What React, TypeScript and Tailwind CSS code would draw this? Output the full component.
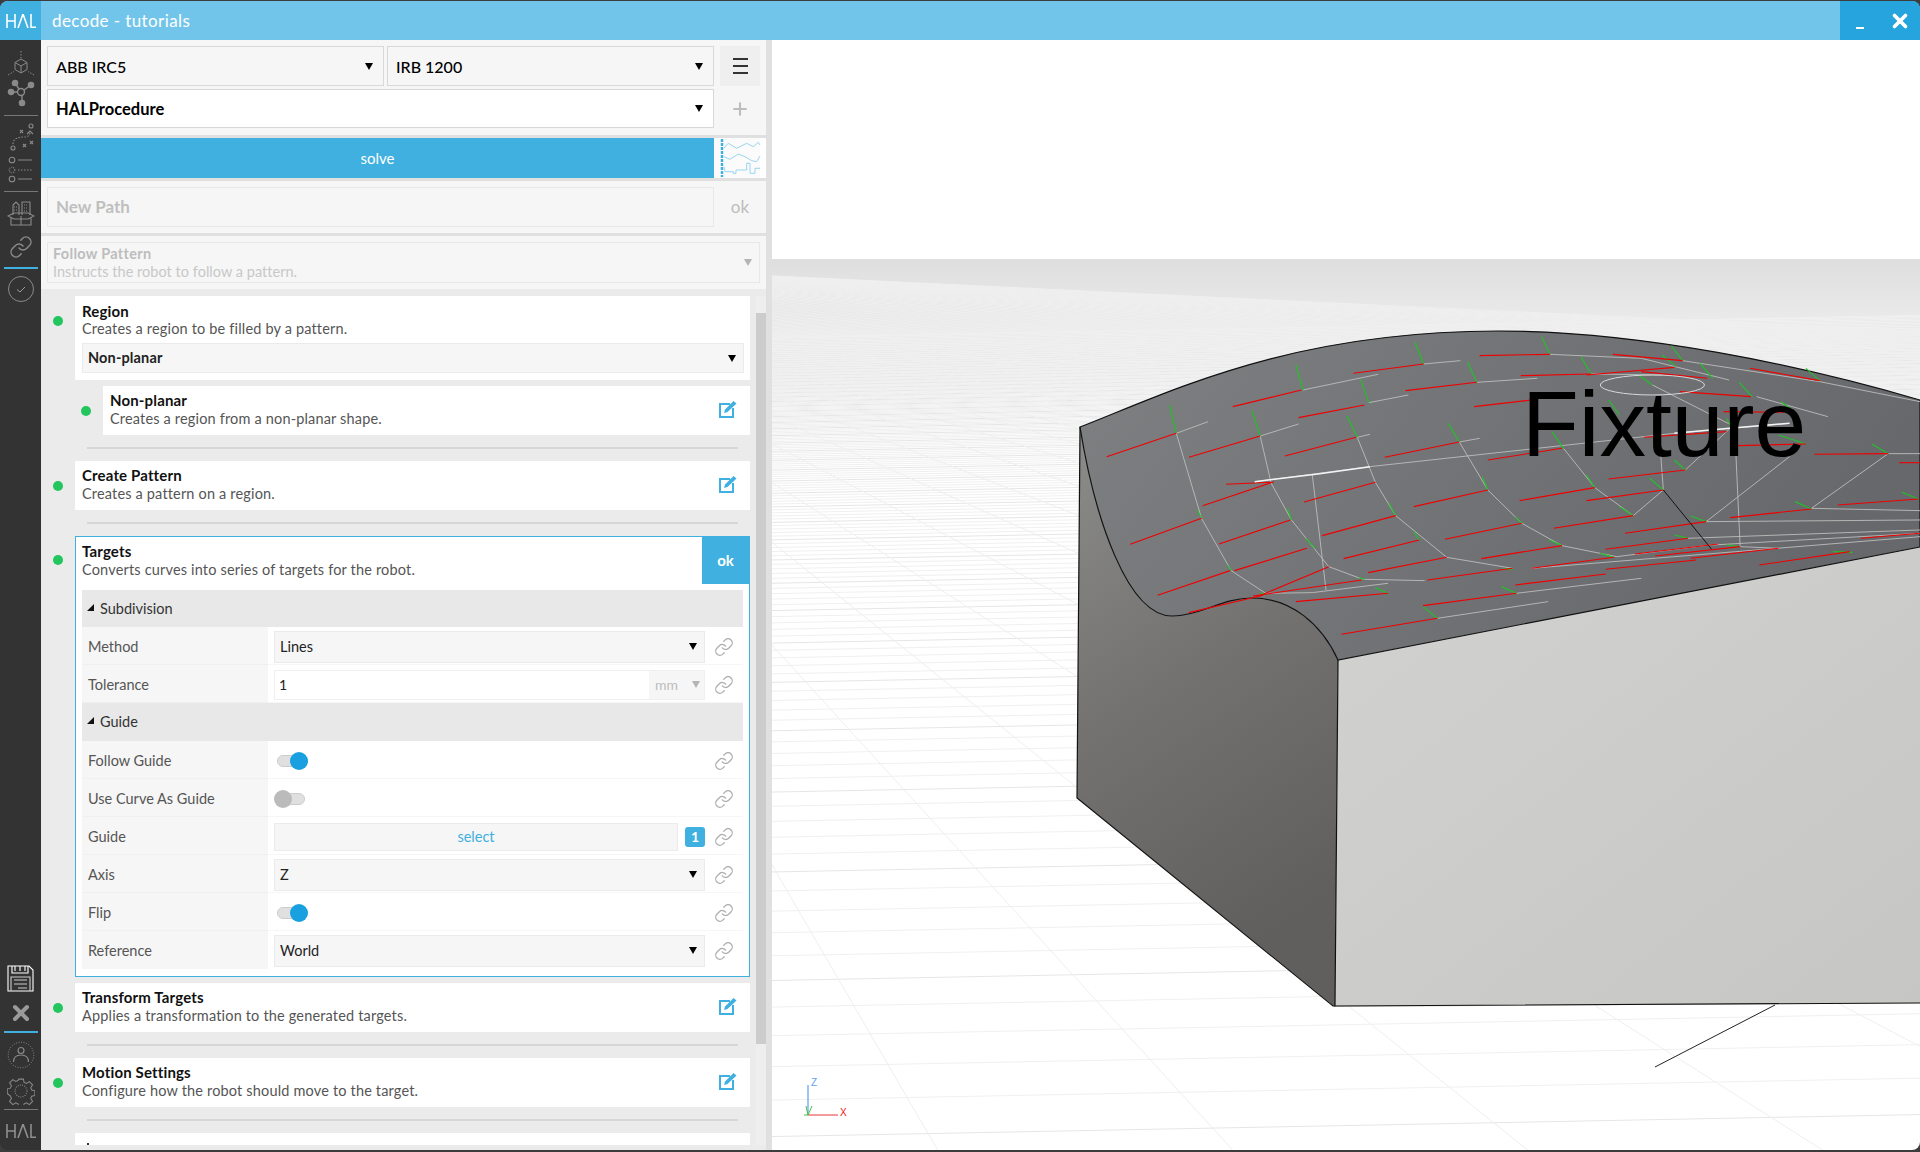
import { Link, X, Plus } from 'lucide-react';

const FONT = "font-['Lato','Noto_Sans',sans-serif]";

function Caret({ muted = false }: { muted?: boolean }) {
  return (
    <svg width="8" height="7" viewBox="0 0 8 7" className="shrink-0">
      <polygon points="0,0 8,0 4,7" fill={muted ? '#b4b4b4' : '#000'} />
    </svg>
  );
}

function EditIcon() {
  return (
    <svg width="18" height="18" viewBox="0 0 18 18" fill="none" className="shrink-0 mb-[3px]">
      <path d="M11 4H1v13h13V8" stroke="#3fb0e0" strokeWidth="2" />
      <path d="M5 13l1-3.500L14.500 1l3 2.500L8.500 12z" fill="#3fb0e0" />
    </svg>
  );
}

function HalLogo({ color, width = 1.6 }: { color: string; width?: number }) {
  return (
    <svg width="30" height="14" viewBox="0 0 30 14" fill="none" stroke={color} strokeWidth={width}>
      <path d="M1 0v14M9 0v14M1 7h8M12 14L17 0L22 14M25 0v13.2h5" />
    </svg>
  );
}

function CubeIcon() {
  return (
    <svg width="28" height="26" viewBox="0 0 28 26" fill="none" stroke="#8a8a8a" strokeWidth="1">
      <path d="M14 0v7M1 24l6-3.500M27 24l-6-3.500" strokeDasharray="1.500 1.500" />
      <path d="M14 8l6 3.500v7L14 22l-6-3.500v-7zM8 11.500l6 3.500l6-3.500M14 15v7" />
    </svg>
  );
}

function GraphIcon() {
  return (
    <svg width="28" height="28" viewBox="0 0 28 28" fill="#8a8a8a" stroke="#8a8a8a" strokeWidth="1.400">
      <circle cx="14" cy="13" r="3.500" fill="none" />
      <circle cx="4" cy="13" r="2.600" />
      <circle cx="24" cy="6" r="2.600" />
      <circle cx="15" cy="24" r="2.600" />
      <circle cx="8" cy="4" r="2.600" />
      <path d="M8 4l4 6M24 6l-7 5M4 13h6M15 17v5" fill="none" />
    </svg>
  );
}

function PlanIcon() {
  return (
    <svg width="28" height="28" viewBox="0 0 28 28" fill="none" stroke="#8a8a8a" strokeWidth="1.100">
      <circle cx="24" cy="3" r="2" />
      <circle cx="6" cy="25" r="2" />
      <path d="M13 7l3 3M16 7l-3 3M16 21l3 3M19 21l-3 3M23 18l3 3M26 18l-3 3" />
      <path d="M6 21c0-6 6-7 12-7c3 0 5-2 5-5" strokeDasharray="1.500 1.500" />
      <path d="M20 11l3-3l3 3" />
    </svg>
  );
}

function ListIcon() {
  return (
    <svg width="28" height="28" viewBox="0 0 28 28" fill="none" stroke="#8a8a8a" strokeWidth="1.100">
      <circle cx="5" cy="4" r="2.800" />
      <path d="M11 4h14" />
      <circle cx="5" cy="14" r="2.800" strokeDasharray="1 1" />
      <path d="M11 14h14" strokeDasharray="1.500 1.500" />
      <circle cx="5" cy="23" r="2.800" />
      <path d="M11 23h14" />
    </svg>
  );
}

function BoxIcon() {
  return (
    <svg width="28" height="28" viewBox="0 0 28 28" fill="none" stroke="#8a8a8a" strokeWidth="1.100">
      <path d="M6 17V7l3-3l3 3v10M15 17V4h8v13" />
      <path d="M7 9h4M7 12h4M17 7h4M17 10h4M17 13h4" strokeDasharray="1 1" />
      <path d="M1 18l6-3h14l6 3l-6 3H7zM4 20v7h20v-7M14 18v9" />
    </svg>
  );
}

function CheckCircleIcon() {
  return (
    <svg width="28" height="28" viewBox="0 0 28 28" fill="none" stroke="#8a8a8a" strokeWidth="1">
      <circle cx="14" cy="14" r="12.500" />
      <path d="M10 14.500l3 2.500l5-5" stroke="#999" />
    </svg>
  );
}

function SaveIcon() {
  return (
    <svg width="27" height="27" viewBox="0 0 27 27" fill="none" stroke="#fff" strokeWidth="1.100">
      <path d="M1 1h21l4 4v21H1z" />
      <path d="M5 1v7h16V1M8 1v5M13 1v5M18 1v5" />
      <path d="M4 26V12h19v14" stroke="#ccc" />
      <path d="M7 15h13M7 19h13M11 23h9" stroke="#ccc" />
    </svg>
  );
}

function PersonIcon() {
  return (
    <svg width="28" height="28" viewBox="0 0 28 28" fill="none" stroke="#8a8a8a" strokeWidth="1">
      <circle cx="14" cy="14" r="12.800" strokeDasharray="1 1.500" />
      <circle cx="14" cy="9.500" r="3" strokeWidth="1.200" />
      <path d="M6.500 21c0-5 3-7 7.500-7s7.500 2 7.500 7" strokeWidth="1.200" />
    </svg>
  );
}

function GearIcon() {
  return (
    <svg width="28" height="28" viewBox="0 0 28 28" fill="none" stroke="#8a8a8a" strokeWidth="1.100">
      <path d="M11.500 1h5l.8 3.600l2.600 1.100l3.100-2l3.500 3.500l-2 3.100l1.100 2.600l3.400.8v5l-3.400.8l-1.100 2.600l2 3.100l-3.500 3.500l-3.100-2l-2.600 1.100l-.8 3.400h-5l-.8-3.400l-2.600-1.100l-3.100 2l-3.500-3.500l2-3.100l-1.100-2.600L-1 16.600v-5l3.400-.8l1.100-2.600l-2-3.100l3.500-3.500l3.100 2l2.600-1.100z" transform="translate(1.200 1.200) scale(.92)" />
      <circle cx="14" cy="14" r="6" strokeDasharray="1 1.200" />
    </svg>
  );
}

function Sidebar() {
  return (
    <div className="w-[41px] shrink-0 bg-[#333333] flex flex-col justify-between items-center">
      <div className="flex flex-col items-center pt-[11px]">
        <CubeIcon />
        <div className="mt-[2px]"><GraphIcon /></div>
        <div className="w-[34px] h-px bg-[#777] mt-[8px]" />
        <div className="mt-[7px]"><PlanIcon /></div>
        <div className="mt-[5px]"><ListIcon /></div>
        <div className="w-[34px] h-px bg-[#777] mt-[7px]" />
        <div className="mt-[6px]"><BoxIcon /></div>
        <div className="mt-[9px]"><Link size={24} color="#8a8a8a" strokeWidth={1.500} /></div>
        <div className="w-[34px] h-[2px] bg-[#3fb0e0] mt-[8px]" />
        <div className="mt-[6px]"><CheckCircleIcon /></div>
      </div>
      <div className="flex flex-col items-center pb-[12px]">
        <SaveIcon />
        <div className="mt-[9px]"><X size={24} color="#9a9a9a" strokeWidth={4} /></div>
        <div className="w-[34px] h-[2px] bg-[#3fb0e0] mt-[6px]" />
        <div className="mt-[8px]"><PersonIcon /></div>
        <div className="mt-[8px]"><GearIcon /></div>
        <div className="w-[34px] h-px bg-[#777] mt-[4px]" />
        <div className="mt-[14px]"><HalLogo color="#8f8f8f" /></div>
      </div>
    </div>
  );
}

function TopSelect({ label, white = false, bold = false }: { label: string; white?: boolean; bold?: boolean }) {
  return (
    <div className={`flex-1 h-full flex items-center justify-between pl-[8px] pr-[10px] border border-[#d8d8d8] text-black ${white ? 'bg-white' : 'bg-[#f6f6f6]'} ${bold ? 'font-bold text-[16.5px]' : 'font-medium text-[16px]'}`}>
      <span className="pt-px">{label}</span>
      <Caret />
    </div>
  );
}

function SolveChart() {
  return (
    <svg width="52" height="40" viewBox="0 0 52 40" className="bg-white" fill="none" strokeWidth="0.900">
      <rect x="0" y="0" width="46" height="40" fill="#fbfbfb" />
      <path d="M8 1v38" stroke="#3fb0e0" strokeWidth="2.500" strokeDasharray="3 1" />
      <path d="M10 10L14.300 5.300L22.700 10.300L32.700 5.300L39.300 8.700L44.300 4.300L46 7" stroke="#8ed0ee" />
      <path d="M10 18.700L16 21.300L24.300 16L31 18.700L37.700 22.700L42.700 23.700L46 18" stroke="#8ed0ee" />
      <path d="M10 28.700L11 33.700H19.300V35.300H22V32H32.700V25.300H36V35.300H41V30.300H46" stroke="#8ed0ee" />
    </svg>
  );
}

function StepCard({ title, desc, indent = false }: { title: string; desc: string; indent?: boolean }) {
  return (
    <div className="flex items-center">
      <div className={`shrink-0 flex justify-center ${indent ? 'w-[62px] pl-[28px]' : 'w-[34px]'}`}>
        <div className="w-[10px] h-[10px] rounded-full bg-[#22c55e]" />
      </div>
      <div className="flex-1 h-[49px] bg-white pl-[7px] pr-[13px] flex items-center justify-between">
        <div className="flex flex-col pb-[2px]">
          <span className="text-[15px] leading-[18px] font-bold text-[#111] tracking-[0.15px] mb-px">{title}</span>
          <span className="text-[14.500px] leading-[18px] text-[#555] tracking-[0.17px]">{desc}</span>
        </div>
        <EditIcon />
      </div>
    </div>
  );
}

function Divider() {
  return <div className="h-[2px] bg-[#d6d6d6] ml-[46px] mr-[12px] my-[12px]" />;
}

function Row({ label, children, last = false }: { label: string; children?: React.ReactNode; last?: boolean }) {
  return (
    <div className="flex h-[38px]">
      <div className={`w-[186px] shrink-0 bg-[#f6f6f6] flex items-center pl-[6px] text-[14.500px] text-[#555] ${last ? 'pt-px' : 'pt-[2px] border-b border-[#f0f0f0]'}`}>
        {label}
      </div>
      <div className={`flex-1 bg-white flex items-center pl-[6px] ${last ? 'pt-px' : 'pt-[2px] border-b border-[#f6f6f6]'}`}>
        <div className="w-[431px] flex items-center">{children}</div>
        <div className="flex-1 flex justify-center">
          <Link size={20} color="#adadad" strokeWidth={1.500} />
        </div>
      </div>
    </div>
  );
}

function FieldSelect({ label }: { label: string }) {
  return (
    <div className="w-full h-[32px] bg-[#f6f6f6] border border-[#ebebeb] flex items-center justify-between pl-[5px] pr-[7px] text-[14.500px] text-[#222]">
      <span>{label}</span>
      <Caret />
    </div>
  );
}

function Toggle({ on }: { on: boolean }) {
  return (
    <div className="relative w-[31px] h-[18px] flex items-center">
      <div className={`h-[12px] w-[26px] rounded-full border border-[#ccc] bg-[#e0e0e0] ${on ? 'ml-[3px]' : 'ml-[5px]'}`} />
      <div className={`absolute top-0 w-[18px] h-[18px] rounded-full ${on ? 'left-[16px] bg-[#18a0e0]' : 'left-0 bg-[#bbbbbb]'}`} />
    </div>
  );
}

function SectionHeader({ label, tall = false }: { label: string; tall?: boolean }) {
  return (
    <div className={`bg-[#e8e8e8] flex items-center pl-[5px] text-[14.500px] text-[#333] ${tall ? 'h-[38px]' : 'h-[37px]'}`}>
      <svg width="7" height="7" viewBox="0 0 7 7" className="mr-[6px] -mt-[3px]"><polygon points="0,7 7,7 7,0" fill="#111" /></svg>
      {label}
    </div>
  );
}

function TargetsCard() {
  return (
    <div className="flex">
      <div className="w-[34px] shrink-0 flex justify-center pt-[19px]">
        <div className="w-[10px] h-[10px] rounded-full bg-[#22c55e]" />
      </div>
      <div className="flex-1 border border-[#3fb0e0] bg-white">
        <div className="h-[47px] flex justify-between items-stretch">
          <div className="flex flex-col justify-center pl-[6px]">
            <span className="text-[15px] leading-[18px] font-bold text-[#111] tracking-[0.15px] mb-px">Targets</span>
            <span className="text-[14.500px] leading-[18px] text-[#555] tracking-[0.17px]">Converts curves into series of targets for the robot.</span>
          </div>
          <div className="w-[47px] bg-[#3fb0e0] text-white font-bold text-[15px] flex items-center justify-center">ok</div>
        </div>
        <div className="px-[6px] pt-[6px] pb-[7px]">
          <SectionHeader label="Subdivision" />
          <Row label="Method"><FieldSelect label="Lines" /></Row>
          <Row label="Tolerance">
            <div className="w-full h-[30px] flex border border-[#f0f0f0]">
              <div className="flex-1 bg-white flex items-center pl-[4px] text-[14px] text-[#222]">1</div>
              <div className="w-[55px] bg-[#f6f6f6] flex items-center justify-between pl-[6px] pr-[4px] text-[14px] text-[#bdbdbd]">
                <span>mm</span>
                <Caret muted />
              </div>
            </div>
          </Row>
          <SectionHeader label="Guide" tall />
          <Row label="Follow Guide"><Toggle on /></Row>
          <Row label="Use Curve As Guide"><Toggle on={false} /></Row>
          <Row label="Guide">
            <div className="flex w-full items-center gap-[7px]">
              <div className="flex-1 h-[28px] bg-[#f6f6f6] border border-[#ebebeb] flex items-center justify-center text-[14.500px] text-[#3fb0e0]">select</div>
              <div className="w-[20px] h-[20px] rounded-[3px] bg-[#3fb0e0] text-white font-bold text-[14px] flex items-center justify-center">1</div>
            </div>
          </Row>
          <Row label="Axis"><FieldSelect label="Z" /></Row>
          <Row label="Flip"><Toggle on /></Row>
          <Row label="Reference" last><FieldSelect label="World" /></Row>
        </div>
      </div>
    </div>
  );
}

function Panel() {
  return (
    <div className="w-[731px] shrink-0 bg-[#e0e0e0] pr-[6px] flex flex-col gap-[3px]">
      <div className="h-[95px] bg-[#f6f6f6] pl-[6px] pr-[6px] pt-[6px] flex flex-col gap-[3px] shrink-0">
        <div className="h-[40px] flex">
          <div className="w-[667px] flex gap-[3px]">
            <div className="w-[337px] h-full flex"><TopSelect label="ABB IRC5" /></div>
            <div className="flex-1 h-full flex"><TopSelect label="IRB 1200" /></div>
          </div>
          <div className="flex-1 pl-[6px]">
            <div className="w-[40px] h-full bg-[#efefef] flex flex-col items-center justify-center gap-[5px]">
              <div className="w-[15px] h-[2px] bg-[#333]" />
              <div className="w-[15px] h-[2px] bg-[#333]" />
              <div className="w-[15px] h-[2px] bg-[#333]" />
            </div>
          </div>
        </div>
        <div className="h-[39px] flex">
          <div className="w-[667px] h-full flex"><TopSelect label="HALProcedure" white bold /></div>
          <div className="flex-1 pl-[6px] flex">
            <div className="w-[40px] flex items-center justify-center"><Plus size={20} color="#bdbdbd" strokeWidth={2.500} /></div>
          </div>
        </div>
      </div>
      <div className="h-[40px] shrink-0 flex">
        <div className="w-[673px] bg-[#3fb0e0] text-white text-[15px] flex items-center justify-center">solve</div>
        <SolveChart />
      </div>
      <div className="h-[52px] shrink-0 bg-[#f6f6f6] pl-[6px] flex items-center">
        <div className="w-[667px] h-[40px] border border-[#e8e8e8] flex items-center pl-[8px] text-[17px] font-bold text-[#bfbfbf]">New Path</div>
        <div className="flex-1 text-center text-[17px] text-[#bdbdbd]">ok</div>
      </div>
      <div className="h-[53px] shrink-0 bg-[#f6f6f6] px-[6px] flex items-center">
        <div className="w-full h-[41px] border border-[#e8e8e8] flex items-center justify-between pl-[5px] pr-[7px]">
          <div className="flex flex-col">
            <span className="text-[14.500px] leading-[18px] font-bold text-[#bdbdbd] tracking-[0.3px]">Follow Pattern</span>
            <span className="text-[14.500px] leading-[18px] text-[#c8c8c8] tracking-[0.03px]">Instructs the robot to follow a pattern.</span>
          </div>
          <Caret muted />
        </div>
      </div>
      <div className="flex-1 min-h-0 -mt-[3px] bg-[#ebebeb] flex pt-[7px] pb-[5px]">
        <div className="w-[709px] overflow-hidden">
          <div className="flex items-center">
            <div className="w-[34px] shrink-0 flex justify-center">
              <div className="w-[10px] h-[10px] rounded-full bg-[#22c55e] -mt-[22px]" />
            </div>
            <div className="flex-1 h-[84px] bg-white pl-[7px] pr-[6px] pt-[6px]">
              <div className="text-[15px] leading-[18px] font-bold text-[#111] tracking-[0.15px]">Region</div>
              <div className="text-[14.500px] leading-[18px] text-[#555] tracking-[0.17px]">Creates a region to be filled by a pattern.</div>
              <div className="mt-[5px] h-[30px] bg-[#f6f6f6] border border-[#ebebeb] flex items-center justify-between pl-[5px] pr-[7px] text-[14.500px] font-bold text-[#222] tracking-[0.15px]">
                <span>Non-planar</span>
                <Caret />
              </div>
            </div>
          </div>
          <div className="mt-[6px]"><StepCard title="Non-planar" desc="Creates a region from a non-planar shape." indent /></div>
          <Divider />
          <StepCard title="Create Pattern" desc="Creates a pattern on a region." />
          <Divider />
          <TargetsCard />
          <div className="mt-[6px]"><StepCard title="Transform Targets" desc="Applies a transformation to the generated targets." /></div>
          <Divider />
          <StepCard title="Motion Settings" desc="Configure how the robot should move to the target." />
          <Divider />
          <div className="ml-[34px] h-[12px] bg-white pl-[12px] pt-[10px]">
            <div className="w-[2px] h-[2px] bg-[#333]" />
          </div>
        </div>
        <div className="ml-[6px] w-[10px] h-full bg-[#eeeeee] pt-[17px]">
          <div className="h-[731px] bg-[#cccccc]" />
        </div>
      </div>
    </div>
  );
}

// ground grid, same vanishing point for both line families
const HORIZON = 259;
const crossLines = Array.from({ length: 260 }, (_, n) => HORIZON + 1 / (0.00115 + 0.0000503 * n)).filter(y => y < 1152);
const depthLines = Array.from({ length: 70 }, (_, k) => 0.581 + 0.331 * (k - 8));

const red = [
  [85,410,212,340],[235,412,365,348],[410,408,540,352],[592,412,728,366],[780,420,915,385],[315,260,440,210],[435,293,555,255],[535,160,663,132],
  [630,212,760,187],[755,260,870,238],[765,107,893,103],[840,167,968,162],[1008,103,1135,122],[960,165,1120,142],[1060,155,1180,175],[1130,215,1260,230],
  [1258,145,1385,182],[1210,275,1320,277],[303,493,385,487],[260,557,390,485],[445,546,575,487],[645,560,780,510],[838,542,975,503],[1000,477,1140,450],
  [960,542,1100,510],[1065,352,1215,335],[1235,377,1360,372],[1375,403,1510,401],[1530,428,1568,428],[128,673,258,595],[290,672,420,600],[478,647,612,587],
  [702,658,842,610],[900,625,1045,587],[1030,640,1178,605],[1222,593,1370,567],[1418,555,1565,537],[178,826,310,752],[318,752,450,685],[517,716,655,660],
  [768,716,915,677],[995,688,1145,655],[1048,702,1200,672],[1085,708,1240,680],[1150,715,1310,685],[360,830,490,740],[562,758,705,712],[352,828,550,780],
  [430,845,598,820],[670,780,825,745],[830,795,995,762],[860,745,1010,712],[995,748,1160,720],[662,857,832,820],[513,943,688,895],[235,878,370,826],
  [1275,735,1440,695],[1460,655,1568,640],
];
const green = [
  [200,255,212,340],[350,272,365,348],[523,287,542,352],[708,310,728,366],[897,335,918,385],[647,67,663,132],[430,133,443,210],[548,178,563,248],
  [743,125,760,187],[878,50,893,103],[950,110,968,162],[1115,78,1135,122],[1167,130,1190,175],[1238,187,1262,230],[1098,105,1123,140],[1055,165,1080,195],
  [1360,145,1385,182],[1315,245,1335,270],[1000,240,1020,285],[1215,295,1225,325],[1310,345,1360,372],[1480,372,1510,401],[1535,517,1565,537],[1340,545,1370,567],
  [1150,588,1178,605],[1120,645,1145,655],[1075,475,1100,510],[1120,420,1140,450],[960,465,975,503],[1020,560,1045,587],[770,470,780,510],[600,550,612,587],
  [415,565,422,600],[250,570,258,595],[305,735,312,752],[448,655,465,685],[645,635,655,660],[830,590,842,610],[892,660,915,677],[985,700,1010,712],
  [808,745,825,748],[545,773,555,778],[365,818,375,825],[575,803,598,820],[805,800,832,820],[662,860,688,895],[1215,675,1240,680],[1410,695,1445,697],
];
const gray = [
  '270,305 212,340 258,595 312,752 375,820 460,818 598,790',
  '435,312 365,348 385,490 422,600 490,740 552,778 665,782',
  '565,343 542,352 575,487 612,587 705,712 825,745',
  '765,355 728,366 780,510 842,610 915,677 1015,710',
  '918,385 975,503 1045,587 1100,510 1095,400',
  '460,465 485,810',
  '355,485 565,440 1120,340 1330,310',
  '1140,450 1225,320',
  '1080,195 1230,320 1240,680',
  '1178,605 1330,410',
  '1370,565 1510,401 1568,401',
  '1178,605 1568,600',
  '1370,565 1568,572',
  '1145,655 1568,630',
  '1190,675 1568,640',
  '1240,680 1310,685',
  '1015,710 1200,672',
  '860,745 1568,650',
  '688,895 890,845',
  '832,820 1060,775',
  '443,210 580,163',
  '563,248 635,225',
  '663,132 730,122',
  '760,187 870,175',
  '893,103 1060,115 1220,180',
  '968,162 1100,165',
  '1135,122 1385,185 1568,245',
  '1270,230 1400,290',
];

const OUTLINE = 'M1080,427 C1170,392 1290,331 1499,331 C1640,331 1800,365 1920,400 L1920,547 L1338,660 C1322,625 1292,598 1252,598 C1222,598 1200,616 1172,616 C1128,616 1095,520 1080,427 Z';

function Viewport() {
  return (
    <div className="flex-1 bg-white relative overflow-hidden">
      <svg className="absolute inset-0 w-full h-full" viewBox="772 40 1148 1110" preserveAspectRatio="none">
        <defs>
          <linearGradient id="haze" x1="0" y1="0" x2="0" y2="1">
            <stop offset="0" stopColor="#dedede" />
            <stop offset="0.5" stopColor="#ececec" />
            <stop offset="1" stopColor="#ffffff" />
          </linearGradient>
          <linearGradient id="topFace" x1="0" y1="0" x2="1" y2="0.300">
            <stop offset="0" stopColor="#7e8082" />
            <stop offset="1" stopColor="#67686b" />
          </linearGradient>
          <linearGradient id="sideFace" x1="0" y1="0" x2="0.300" y2="1">
            <stop offset="0" stopColor="#8c8c8a" />
            <stop offset="0.500" stopColor="#737270" />
            <stop offset="1" stopColor="#605f5d" />
          </linearGradient>
          <linearGradient id="frontFace" x1="0" y1="0" x2="1" y2="1">
            <stop offset="0" stopColor="#d2d2d0" />
            <stop offset="1" stopColor="#c6c6c4" />
          </linearGradient>
        </defs>
        <rect x="772" y="259" width="1148" height="140" fill="url(#haze)" />
        {crossLines.map((y, i) => (
          <line key={i} x1="772" y1={y + 8} x2="1920" y2={y - 14} stroke={i % 5 === 0 ? '#e6e6e6' : '#f0f0f0'} strokeWidth="1" />
        ))}
        {depthLines.map((g, i) => (
          <line key={i} x1={420 + g * 2} y1={HORIZON + 2} x2={420 + g * 893} y2="1152" stroke="#efefef" strokeWidth="1" />
        ))}

        <path d="M1080,427 C1095,520 1128,616 1172,616 C1200,616 1222,598 1252,598 C1292,598 1322,625 1338,660 L1335,1007 L1077,798 Z" fill="url(#sideFace)" />
        <path d="M1338,660 L1920,547 L1920,1003 L1335,1007 Z" fill="url(#frontFace)" />
        <path d={OUTLINE} fill="url(#topFace)" />
        <path d={OUTLINE} fill="none" stroke="#111" strokeWidth="1.200" />
        <path d="M1080,427 L1077,798 L1333,1006 L1920,1003 M1338,660 L1335,1006" fill="none" stroke="#111" strokeWidth="1.200" />
        <line x1="1775" y1="1005" x2="1655" y2="1067" stroke="#222" strokeWidth="1" />

        <g transform="translate(1060 320) scale(.5485 .3333)" fill="none">
          {gray.map((p, i) => <polyline key={i} points={p} stroke="#bcbcbc" strokeWidth="0.900" vectorEffect="non-scaling-stroke" />)}
          {green.map((l, i) => <line key={i} x1={l[0]} y1={l[1]} x2={l[2]} y2={l[3]} stroke="#22c02a" strokeWidth="1.200" vectorEffect="non-scaling-stroke" />)}
          {red.map((l, i) => <line key={i} x1={l[0]} y1={l[1]} x2={l[2]} y2={l[3]} stroke="#f00000" strokeWidth="1.100" vectorEffect="non-scaling-stroke" />)}
          <polyline points="355,485 470,462 565,440" stroke="#f4f4f4" strokeWidth="1.500" vectorEffect="non-scaling-stroke" />
          <polyline points="1120,340 1220,325 1330,310" stroke="#f4f4f4" strokeWidth="1.500" vectorEffect="non-scaling-stroke" />
          <ellipse cx="1080" cy="195" rx="95" ry="30" stroke="#d8d8d8" strokeWidth="1" vectorEffect="non-scaling-stroke" />
          <line x1="1100" y1="510" x2="1188" y2="688" stroke="#111" strokeWidth="1" vectorEffect="non-scaling-stroke" />
        </g>

        <text x="1522" y="456" fontFamily="'Liberation Sans', Arial, sans-serif" fontSize="93" fill="#000">Fixture</text>

        <line x1="808" y1="1085" x2="808" y2="1115" stroke="#3a8dea" strokeWidth="1" />
        <line x1="808" y1="1115" x2="838" y2="1115" stroke="#f27878" strokeWidth="1.500" />
        <path d="M804,1115 L808,1115 L812,1106 M808,1115 L806,1106" fill="none" stroke="#43c04a" strokeWidth="1" />
        <text x="811" y="1086" fontFamily="'Liberation Sans', sans-serif" fontSize="10" fill="#5da5ee">Z</text>
        <text x="840" y="1116" fontFamily="'Liberation Sans', sans-serif" fontSize="10" fill="#f01818">X</text>
      </svg>
    </div>
  );
}

export default function App() {
  return (
    <div className={`w-[1920px] h-[1152px] bg-[#3c3c3c] pt-px pb-[2px] overflow-hidden ${FONT}`}>
      <div className="w-full h-full rounded-[8px] overflow-hidden flex flex-col">
        <div className="h-[39px] shrink-0 bg-[#72c5ea] flex items-center">
          <div className="w-[41px] h-full bg-[#3fb0e0] flex items-center justify-center"><HalLogo color="#fff" /></div>
          <div className="ml-[11px] text-[17px] text-white flex-1 tracking-[0.4px]">decode - tutorials</div>
          <div className="w-[80px] h-full bg-[#25a4de] flex items-center">
            <div className="ml-[16px] mt-[14px] w-[8px] h-[2px] bg-white" />
            <div className="ml-[25px]"><X size={22} color="#fff" strokeWidth={4} /></div>
          </div>
        </div>
        <div className="flex-1 min-h-0 flex">
          <Sidebar />
          <Panel />
          <Viewport />
        </div>
      </div>
    </div>
  );
}
